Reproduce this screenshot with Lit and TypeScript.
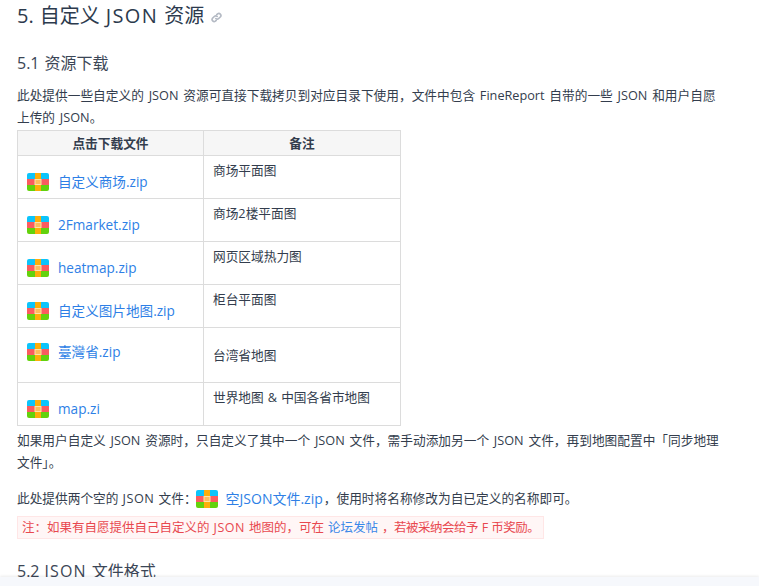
import { LitElement, html, css } from "lit";
import { customElement } from "lit/decorators.js";

const zipIcon = html`<svg class="zip" viewBox="0 0 22 18" width="22" height="18" aria-hidden="true">
  <defs><clipPath id="r"><rect width="22" height="18" rx="2"/></clipPath></defs>
  <g clip-path="url(#r)">
    <rect width="22" height="6" fill="#0cc4fb"/>
    <rect y="6" width="22" height="6" fill="#fb5b5f"/>
    <rect y="12" width="22" height="6" fill="#63d20c"/>
    <rect x="8" width="6" height="18" fill="#fdae0a"/>
    <rect x="8" y="6.5" width="6" height="5" fill="#fdbd5c" stroke="#fde3a8" stroke-width="1"/>
  </g>
</svg>`;

const J = html`<span class="j">JSON</span>`;

const rows: [string, string, string][] = [
  ["自定义商场.zip", "商场平面图", ""],
  ["2Fmarket.zip", "商场2楼平面图", ""],
  ["heatmap.zip", "网页区域热力图", ""],
  ["自定义图片地图.zip", "柜台平面图", ""],
  ["臺灣省.zip", "台湾省地图", "tall"],
  ["map.zi", "世界地图 & 中国各省市地图", ""],
];

@customElement("app-root")
export class AppRoot extends LitElement {
  static styles = css`
    :host {
      display: block;
      position: relative;
      width: 759px;
      height: 586px;
      overflow: hidden;
      background: #fff;
      color: #333d4d;
      font-family: "Open Sans", "Noto Sans CJK SC", sans-serif;
      font-size: 12.7px;
      line-height: 21.5px;
      word-spacing: 0.8px;
    }
    .page { padding: 0 17px; width: 703px; }
    .j { letter-spacing: 0.5px; }
    h2 {
      margin: 0;
      padding-bottom: 2px;
      box-sizing: border-box;
      font-size: 20px;
      line-height: 28px;
      font-weight: 400;
      color: #2c3a4d;
      display: flex;
      align-items: center;
      height: 33px;
      gap: 7px;
    }
    h2 .j { letter-spacing: 1.4px; }
    .anchor { color: #b4bac4; margin-top: 4px; display: block; }
    h3 {
      margin: 0;
      font-size: 16px;
      line-height: 24px;
      font-weight: 400;
      color: #3b4656;
    }
    h3 .j { letter-spacing: 1.2px; }
    .h51 { margin-top: 18px; }
    p { margin: 0; word-spacing: 1.5px; }
    .intro { margin-top: 10px; }
    table {
      border-collapse: collapse;
      table-layout: fixed;
      width: 384px;
      margin-top: 2px;
      border: 1px solid #dcdcdc;
    }
    th, td { border: 1px solid #dcdcdc; padding: 0; box-sizing: border-box; }
    th {
      height: 25px;
      background: #f6f6f6;
      font-weight: 700;
      text-align: center;
      line-height: 24px;
      color: #333d4d;
    }
    .c1 { width: 186px; }
    td { height: 43px; vertical-align: top; }
    td.file { padding-left: 9px; }
    td.note { padding: 4px 9px 0; }
    tr.tall td { height: 55px; }
    tr.tall td.note { padding-top: 17px; }
    tr.tall .file-wrap { padding-top: 13px; }
    .file-wrap { display: flex; align-items: center; gap: 9px; padding-top: 15px; }
    .zip { flex: none; display: block; }
    a { color: #2e7fe6; text-decoration: none; }
    .file-wrap a { font-size: 13.6px; line-height: 21px; }
    .after { padding-top: 4px; }
    .empty { display: flex; align-items: center; margin-top: 15px; height: 22px; }
    .empty .zip { margin: 0 8px 0 -1px; }
    .empty a { font-size: 14px; margin-right: 1px; }
    .note-box {
      display: inline-block;
      margin-top: 6px;
      padding: 0 4px;
      background: #fff6f6;
      border: 1px solid #ffe6e6;
      color: #e8484f;
      font-size: 12.5px;
      line-height: 21px;
    }
    .note-box a { color: #3a87e8; }
    .tail { letter-spacing: -0.5px; }
    .h52 { margin-top: 20px; }
    .footer {
      position: absolute;
      left: 0;
      right: 0;
      bottom: 0;
      height: 9px;
      background: #f6f8fc;
      box-shadow: 0 -1px 3px rgba(0, 0, 0, 0.08);
    }
  `;

  render() {
    return html`
      <div class="page">
        <h2><span>5. 自定义 ${J} 资源</span>
          <svg class="anchor" width="11" height="11" viewBox="0 0 16 16" fill="none" stroke="currentColor" stroke-width="2.4" stroke-linecap="round" aria-hidden="true">
            <path d="M7 9.5a3 3 0 0 0 4.2 0l2.6-2.6a3 3 0 0 0-4.2-4.2L8.4 3.9"/>
            <path d="M9 6.5a3 3 0 0 0-4.2 0L2.2 9.1a3 3 0 0 0 4.2 4.2l1.2-1.2"/>
          </svg>
        </h2>
        <h3 class="h51">5.1 资源下载</h3>
        <p class="intro">此处提供一些自定义的 JSON 资源可直接下载拷贝到对应目录下使用，文件中包含 FineReport 自带的一些 JSON 和用户自愿上传的 JSON。</p>
        <table>
          <colgroup><col class="c1" /><col /></colgroup>
          <thead><tr><th>点击下载文件</th><th>备注</th></tr></thead>
          <tbody>
            ${rows.map(([f, n, k]) => html`<tr class=${k}>
              <td class="file"><div class="file-wrap">${zipIcon}<a href="#">${f}</a></div></td>
              <td class="note">${n}</td>
            </tr>`)}
          </tbody>
        </table>
        <p class="after">如果用户自定义 JSON 资源时，只自定义了其中一个 JSON 文件，需手动添加另一个 JSON 文件，再到地图配置中「同步地理文件」。</p>
        <div class="empty"><span>此处提供两个空的 ${J} 文件：</span>${zipIcon}<a href="#">空JSON文件.zip</a><span>，使用时将名称修改为自已定义的名称即可。</span></div>
        <div class="note-box">注：如果有自愿提供自己自定义的 ${J} 地图的，可在 <a href="#">论坛发帖</a> <span class="tail">，若被采纳会给予 F 币奖励。</span></div>
        <h3 class="h52">5.2 ${J} 文件格式</h3>
      </div>
      <div class="footer"></div>
    `;
  }
}
